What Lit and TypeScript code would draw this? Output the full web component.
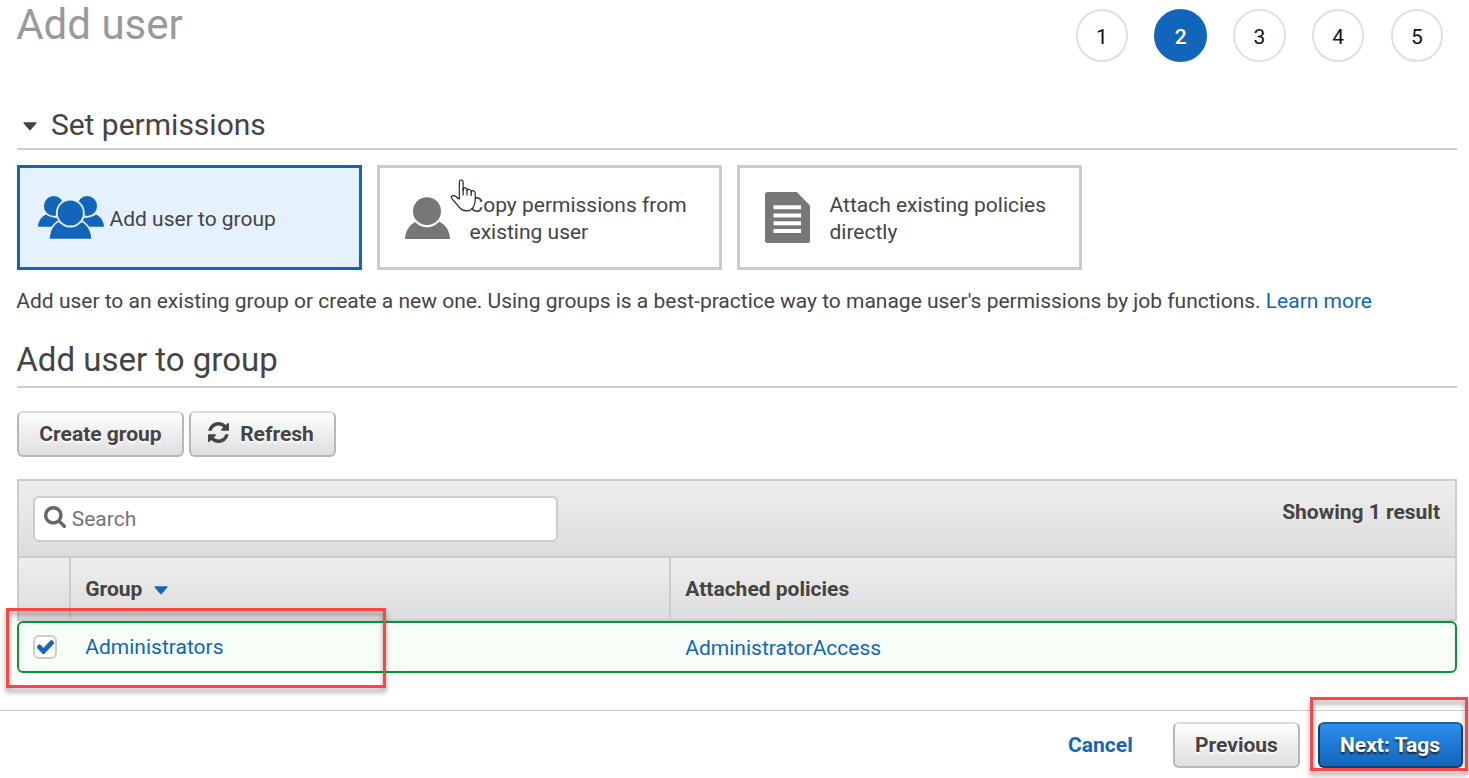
import { LitElement, html, css, svg, nothing } from "lit";
import { customElement, property, state } from "lit/decorators.js";
import { classMap } from "lit/directives/class-map.js";

const groupIcon = svg`
  <svg class="ic-group" width="66" height="43" viewBox="0 0 66 43">
    <g fill="#1166bb">
      <path d="M0 30.8C.2 25.500 3 21 8 18.600Q12.500 22 20 22L24 30.800Z"/>
      <path d="M66 30.800C65.800 25.500 63 21 58 18.600Q53.500 22 46 22L42 30.800Z"/>
      <circle cx="15.800" cy="10" r="9.900"/>
      <circle cx="49.200" cy="10" r="9.900"/>
    </g>
    <path d="M11.700 42.800C12.200 35.500 15 30 19.600 26.500H45C49.600 30 52.800 35.500 53.300 42.800Z" fill="#1166bb" stroke="#e6f1fe" stroke-width="3.200" paint-order="stroke"/>
    <circle cx="32.300" cy="17" r="14.400" fill="#e6f1fe"/>
    <circle cx="32.300" cy="17" r="12.600" fill="#1166bb"/>
  </svg>`;

const personIcon = svg`
  <svg width="45" height="42" viewBox="0 0 45 42">
    <path d="M0 42C.4 34 4 28 11 24.500H34C41 28 44.600 34 45 42Z" fill="#777"/>
    <circle cx="22" cy="14.200" r="16" fill="#fff"/>
    <circle cx="22" cy="14.200" r="14" fill="#777"/>
  </svg>`;

const docIcon = svg`
  <svg width="45" height="51" viewBox="0 0 45 51">
    <path d="M2.500 0H31.800L45 13.500V48.500Q45 51 42.500 51H2.500Q0 51 0 48.500V2.500Q0 0 2.500 0Z" fill="#777"/>
    <path d="M8.500 13.300H36V17.300H8.500ZM8.500 21.500H36V25.500H8.500ZM8.500 29.300H36V33.300H8.500ZM8.500 37H36V41H8.500Z" fill="#fff"/>
  </svg>`;

const caret = (color: string) => svg`
  <svg width="14" height="9" viewBox="0 0 14 9">
    <path d="M1 .3H13Q14 .6 13.300 1.500L7.700 7.900Q7 8.600 6.300 7.900L.7 1.500Q0 .6 1 .3Z" fill=${color}/>
  </svg>`;

const refreshIcon = svg`
  <svg width="21" height="21" viewBox="0 0 1536 1536">
    <path fill="#444" d="M1511 928q0 5-1 7-64 268-268 434.500t-478 166.500q-146 0-282.500-55t-243.500-157l-129 129q-19 19-45 19t-45-19-19-45v-448q0-26 19-45t45-19h448q26 0 45 19t19 45-19 45l-137 137q71 66 161 102t187 36q134 0 250-65t186-179q11-17 53-117 8-23 30-23h192q13 0 22.500 9.500t9.500 22.500zm25-800v448q0 26-19 45t-45 19h-448q-26 0-45-19t-19-45 19-45l138-138q-148-137-349-137-134 0-250 65t-186 179q-11 17-53 117-8 23-30 23h-199q-13 0-22.500-9.500t-9.500-22.500v-7q65-268 270-434.500t480-166.500q146 0 284 55.500t245 156.500l130-129q19-19 45-19t45 19 19 45z"/>
  </svg>`;

const searchIcon = svg`
  <svg width="22" height="22" viewBox="64 128 1664 1664">
    <path fill="#666" d="M1216 832q0-185-131.500-316.500t-316.500-131.500-316.500 131.500-131.500 316.500 131.500 316.500 316.500 131.500 316.500-131.500 131.500-316.500zm512 832q0 52-38 90t-90 38q-54 0-90-38l-343-342q-179 124-399 124-143 0-273.500-55.500t-225-150-150-225-55.500-273.500 55.500-273.500 150-225 225-150 273.500-55.500 273.500 55.500 225 150 150 225 55.500 273.500q0 220-124 399l343 343q37 37 37 90z"/>
  </svg>`;

const checkIcon = svg`
  <svg width="17" height="14" viewBox="121 314 1550 1208" preserveAspectRatio="none">
    <path fill="#1166bb" stroke="#1166bb" stroke-width="50" d="M1671 566q0 40-28 68l-724 724-136 136q-28 28-68 28t-68-28l-136-136-362-362q-28-28-28-68t28-68l136-136q28-28 68-28t68 28l294 295 656-657q28-28 68-28t68 28l136 136q28 28 28 68z"/>
  </svg>`;

const handCursor = svg`
  <svg class="hand" width="27" height="34" viewBox="0 0 27 34">
    <path d="M9.300 19V3Q9.300 1 11.200 1T13.100 3V11.500V10.300Q13.300 8.900 15 8.900T17 10.500V11.500Q17.400 10 19 10.200T21.200 12V13Q21.700 11.400 23.300 11.700T25.200 13.500V21.500C25.200 25 24.300 26.500 23 28.500Q20.500 31.900 16.800 31.900Q13 31.900 10.500 29.500C8 27 5 23 1.700 19.300Q.5 17.600 2 16.900Q3.800 16.200 5.800 17.500Q7.800 19.400 9.300 20Z" fill="#fff" stroke="#14142e" stroke-width="1.100" stroke-linejoin="round"/>
    <path d="M13.100 10V16.500M17 11V16.500M21.200 12.500V17" fill="none" stroke="#14142e" stroke-width="1.100"/>
  </svg>`;

@customElement("wizard-steps")
class WizardSteps extends LitElement {
  @property({ type: Number }) current = 1;
  @property({ type: Number }) total = 5;

  static styles = css`
    :host { display: flex; gap: 26.25px; }
    .step {
      box-sizing: border-box; width: 52.5px; height: 52.5px; padding-top: 3px;
      display: flex; align-items: center; justify-content: center;
      border: 2px solid #e0e0e0; border-radius: 50%; color: #111;
    }
    .current { background: #1166bb; border-color: #1166bb; color: #fff; font-weight: 500; }
  `;

  render() {
    return Array.from({ length: this.total }, (_, i) => html`
      <div class=${classMap({ step: true, current: i + 1 === this.current })}>${i + 1}</div>`);
  }
}

@customElement("permission-card")
class PermissionCard extends LitElement {
  @property() label = "";
  @property({ type: Boolean, reflect: true }) selected = false;

  static styles = css`
    :host {
      box-sizing: border-box; width: 345px; height: 105px;
      display: flex; align-items: center; border: 3px solid #ccc; line-height: 27px;
    }
    :host([selected]) { border-color: #1166bb; background: #e6f1fe; }
    .icon { box-sizing: border-box; width: 89.500px; padding-left: 25px; flex: none; }
    .label { width: 225px; padding-top: 2px; }
    :host([selected]) .icon { padding-left: 18px; }
    :host([selected]) .label { padding-top: 3px; }
  `;

  render() {
    return html`<div class="icon"><slot></slot></div><div class="label">${this.label}</div>`;
  }
}

@customElement("app-root")
class AppRoot extends LitElement {
  @state() private checked = true;

  static styles = css`
    :host {
      display: flex; flex-direction: column; position: relative; box-sizing: border-box;
      height: 778px; overflow: hidden; background: #fff; color: #444;
      font: 21px/28px Roboto, sans-serif;
    }
    svg { display: block; flex: none; }
    main { height: 710px; padding: 0 12px 0 17px; box-sizing: border-box; }
    header { display: flex; justify-content: space-between; height: 62px; }
    h1, h2 { margin: 0; font-weight: 400; }
    h1 { margin-left: -.8px; font-size: 42px; line-height: 49px; color: #999; }
    wizard-steps { padding: 9px 13.900px 0 0; }
    .permissions {
      display: flex; align-items: center; gap: 13.700px; padding: 45px 0 5px 6.200px;
      border-bottom: 2px solid #ccc; font-size: 30px; line-height: 36px;
    }
    .permissions svg { margin-top: 3px; }
    .cards { display: flex; gap: 15px; margin-top: 15px; }
    .intro { margin: 17px 0 0 -.7px; height: 28px; white-space: nowrap; letter-spacing: -.008px; }
    a { color: #1166bb; text-decoration: none; }
    .subtitle { margin-top: 25px; padding-bottom: 7px; border-bottom: 2px solid #ccc; font-size: 33px; line-height: 39px; text-indent: -.7px; }
    .actions { display: flex; gap: 5px; margin-top: 23px; }
    .btn {
      box-sizing: border-box; height: 46px; padding: 0 0 1px; display: flex; align-items: center; justify-content: center;
      border: 2px solid #b7b7b7; border-top-color: #dcdcdc; border-radius: 6px;
      background: linear-gradient(#fff, #ddd); background-origin: border-box;
      font: 700 21px/28px Roboto, sans-serif; color: #444; text-shadow: 0 2px 2px #fff;
    }
    .create { width: 167px; }
    .refresh { width: 147px; gap: 11px; padding-right: 3px; }
    .refresh svg { margin-top: -2px; }
    .previous { width: 127px; }
    .next {
      width: 145px; padding-right: 1px; color: #fff; border-color: #0a4178; border-top-color: #1462af;
      background: linear-gradient(#2e8dee, #1166bb); text-shadow: 0 2px 2px #222;
    }
    .table { margin-top: 22px; }
    .head { border: 2px solid #ccc; }
    .toolbar {
      box-sizing: border-box; height: 75px; padding: 15px 15px 0 14px; display: flex; justify-content: space-between;
      background: linear-gradient(#eee, #ddd);
    }
    .search {
      box-sizing: border-box; width: 525px; height: 46px; padding: 0 8.700px; display: flex; align-items: center; gap: 6px;
      border: 2px solid #ccc; border-radius: 6px; background: #fff; color: #757575;
    }
    .search svg { margin-top: -5px; }
    .count { font-weight: 700; margin-top: 2px; }
    .columns, .row { display: grid; grid-template-columns: 52px 600px 1fr; }
    .columns {
      height: 61px; border-top: 2px solid #ccc; background: linear-gradient(#eee, #ddd); font-weight: 700;
    }
    .cell { box-sizing: border-box; display: flex; align-items: center; padding-left: 14.300px; }
    .columns .cell { border-right: 2px solid #ccc; padding-top: 1px; }
    .columns .cell:last-child { border-right: 0; }
    .sort { margin: 3px 0 0 12px; }
    .row { box-sizing: border-box; height: 52px; border: 2px solid #093; border-radius: 6px; background: #f7fef8; }
    .row .cell:first-child { padding: 0 0 1px 14px; }
    .row .cell:last-child { padding-top: 2px; }
    .check {
      box-sizing: border-box; width: 24px; height: 24px; display: flex; align-items: center; justify-content: center;
      border: 2px solid #ccc; border-radius: 6px; background: #fff;
    }
    footer {
      box-sizing: border-box; height: 68px; border-top: 1px solid #ccc; padding: 11px 6px 0 0;
      display: flex; justify-content: flex-end; align-items: flex-start;
    }
    .cancel { margin: 9px 40.300px 0 0; font-weight: 700; }
    .previous { margin-right: 18px; }
    .hand { position: absolute; left: 449.600px; top: 178.800px; }
    .mark {
      position: absolute; box-sizing: border-box; border: 3px solid #f44;
      filter: drop-shadow(0 4px 2.500px rgba(0, 0, 0, .42)); pointer-events: none;
    }
    .mark-row { left: 6px; top: 608px; width: 380px; height: 80px; }
    .mark-next { left: 1310px; top: 697px; width: 158px; height: 74px; }
  `;

  render() {
    return html`
      <main>
        <header>
          <h1>Add user</h1>
          <wizard-steps current="2" total="5"></wizard-steps>
        </header>
        <h2 class="permissions">${caret("#444")}<span>Set permissions</span></h2>
        <div class="cards">
          <permission-card selected label="Add user to group">${groupIcon}</permission-card>
          <permission-card label="Copy permissions from existing user">${personIcon}</permission-card>
          <permission-card label="Attach existing policies directly">${docIcon}</permission-card>
        </div>
        <p class="intro">Add user to an existing group or create a new one. Using groups is a best-practice way to manage user's permissions by job functions. <a>Learn more</a></p>
        <h2 class="subtitle">Add user to group</h2>
        <div class="actions">
          <button class="btn create">Create group</button>
          <button class="btn refresh">${refreshIcon}<span>Refresh</span></button>
        </div>
        <section class="table">
          <div class="head">
            <div class="toolbar">
              <div class="search">${searchIcon}<span>Search</span></div>
              <div class="count">Showing 1 result</div>
            </div>
            <div class="columns">
              <div class="cell"></div>
              <div class="cell">Group<span class="sort">${caret("#1166bb")}</span></div>
              <div class="cell">Attached policies</div>
            </div>
          </div>
          <div class="row">
            <div class="cell">
              <div class="check" @click=${() => (this.checked = !this.checked)}>${this.checked ? checkIcon : nothing}</div>
            </div>
            <div class="cell"><a>Administrators</a></div>
            <div class="cell"><a>AdministratorAccess</a></div>
          </div>
        </section>
      </main>
      <footer>
        <a class="cancel">Cancel</a>
        <button class="btn previous">Previous</button>
        <button class="btn next">Next: Tags</button>
      </footer>
      ${handCursor}
      <div class="mark mark-row"></div>
      <div class="mark mark-next"></div>
    `;
  }
}
